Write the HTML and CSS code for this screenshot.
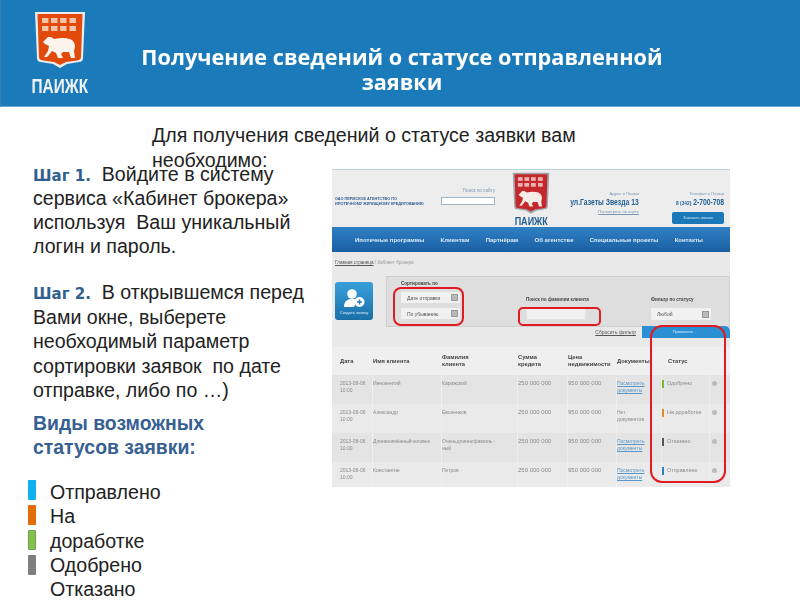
FILE: index.html
```html
<!DOCTYPE html>
<html lang="ru">
<head>
<meta charset="utf-8">
<title>Получение сведений о статусе отправленной заявки</title>
<link rel="stylesheet" href="styles.css">
</head>
<body>
<main class="slide">
  <header class="banner">
    <div class="brand">
      <svg class="shield" viewBox="0 0 52 60" aria-hidden="true">
        <path d="M1 1 L51 1 L49 47 Q49 51 45 51 L33 53 L26 57 L19 53 L7 51 Q3 51 3 47 Z" fill="#e9edf0"/>
        <path d="M3.500 3 L48.500 3 L47 46 Q47 49 43 49.500 L32 51 L26 54 L20 51 L9 49.500 Q5 49 5 46 Z" fill="#e24a0c"/>
        <g fill="#f6c4ab">
          <rect x="8" y="7" width="6.500" height="5"/><rect x="17" y="7" width="6.500" height="5"/><rect x="26" y="7" width="6.500" height="5"/><rect x="35.500" y="7" width="6.500" height="5"/>
          <rect x="8" y="15" width="6.500" height="5"/><rect x="17" y="15" width="6.500" height="5"/><rect x="26" y="15" width="6.500" height="5"/><rect x="35.500" y="15" width="6.500" height="5"/>
        </g>
        <path d="M9 31 L12 28 L14 26 L17 26 L20 28 Q29 26 36 28 Q41 30 41 36 L40 40 L41 47 L37 47 L35 41 L29 41 L27 43 L29 47 L24 47 L22 42 L18 40 L15 44 L13 46 L10 46 L14 40 L15 35 L11 33 Z" fill="#fbf3ec"/>
      </svg>
      <span class="brand-name">ПАИЖК</span>
    </div>
    <h1 class="title">Получение сведений о статусе отправленной заявки</h1>
  </header>

  <p class="intro">Для получения сведений о статусе заявки вам необходимо:</p>

  <section class="steps">
    <p class="step"><b class="step-label">Шаг 1.</b> &nbsp;Войдите в систему сервиса «Кабинет брокера» используя&nbsp; Ваш уникальный логин и пароль.</p>
    <p class="step step-second"><b class="step-label">Шаг 2.</b> &nbsp;В открывшемся перед Вами окне, выберете необходимый параметр сортировки заявок&nbsp; по дате отправке, либо по …)</p>
  </section>

  <section class="kinds">
    <h2 class="kinds-title">Виды возможных статусов заявки:</h2>
    <div class="legend">
      <div class="swatches">
        <i class="swatch swatch-blue"></i>
        <i class="swatch swatch-orange"></i>
        <i class="swatch swatch-green"></i>
        <i class="swatch swatch-gray"></i>
      </div>
      <ul class="legend-list">
        <li>Отправлено</li>
        <li>На доработке</li>
        <li>Одобрено</li>
        <li>Отказано</li>
      </ul>
    </div>
  </section>

  <figure class="shot">
    <div class="site">
      <div class="site-head">
        <div class="org">ОАО ПЕРМСКОЕ АГЕНТСТВО ПО<br>ИПОТЕЧНОМУ ЖИЛИЩНОМУ КРЕДИТОВАНИЮ</div>
        <div class="site-search">
          <span class="site-search-label">Поиск по сайту</span>
          <span class="site-search-box"></span>
        </div>
        <div class="site-logo">
          <svg class="site-shield" viewBox="0 0 52 60" aria-hidden="true">
            <path d="M1 1 L51 1 L49 47 Q49 51 45 51 L33 53 L26 57 L19 53 L7 51 Q3 51 3 47 Z" fill="#9fa7ad"/>
            <path d="M3.500 3 L48.500 3 L47 46 Q47 49 43 49.500 L32 51 L26 54 L20 51 L9 49.500 Q5 49 5 46 Z" fill="#c4282c"/>
            <g fill="#eeb4b4">
              <rect x="8" y="7" width="6.500" height="5"/><rect x="17" y="7" width="6.500" height="5"/><rect x="26" y="7" width="6.500" height="5"/><rect x="35.500" y="7" width="6.500" height="5"/>
              <rect x="8" y="15" width="6.500" height="5"/><rect x="17" y="15" width="6.500" height="5"/><rect x="26" y="15" width="6.500" height="5"/><rect x="35.500" y="15" width="6.500" height="5"/>
            </g>
            <path d="M9 31 L12 28 L14 26 L17 26 L20 28 Q29 26 36 28 Q41 30 41 36 L40 40 L41 47 L37 47 L35 41 L29 41 L27 43 L29 47 L24 47 L22 42 L18 40 L15 44 L13 46 L10 46 L14 40 L15 35 L11 33 Z" fill="#f6ece6"/>
          </svg>
          <span class="site-logo-name">ПАИЖК</span>
        </div>
        <div class="site-address">
          <span class="tiny">Адрес в Перми</span>
          <span class="big">ул.Газеты Звезда 13</span>
          <span class="tiny tiny-link">Посмотреть на карте</span>
        </div>
        <div class="site-phone">
          <span class="tiny">Телефон в Перми</span>
          <span class="big"><small class="big-code">8 (342)</small> 2-700-708</span>
          <span class="call">Заказать звонок</span>
        </div>
      </div>
      <nav class="site-nav">
        <span>Ипотечные программы</span><span>Клиентам</span><span>Партнёрам</span><span>Об агентстве</span><span>Специальные проекты</span><span>Контакты</span>
      </nav>
      <div class="crumbs"><u>Главная страница</u> / Кабинет брокера</div>
      <div class="tools">
        <div class="create">
          <svg class="create-icon" viewBox="0 0 24 20" aria-hidden="true">
            <circle cx="10" cy="6" r="4.800" fill="#fff"/>
            <path d="M2 19 Q2 12 8 11 L12 11 Q15 11 15 13 L12 19 Z" fill="#fff"/>
            <circle cx="17.500" cy="14" r="5" fill="#fff"/>
            <path d="M17.500 11.500 V16.500 M15 14 H20" stroke="#2a7fc0" stroke-width="1.500"/>
          </svg>
          <span>Создать заявку</span>
        </div>
        <div class="filter">
          <div class="filter-col filter-sort">
            <span class="filter-label">Сортировать по</span>
            <span class="select select-sort">Дате отправки<i></i></span>
            <span class="select select-sort">По убыванию<i></i></span>
          </div>
          <div class="filter-col filter-name">
            <span class="filter-label">Поиск по фамилии клиента</span>
            <span class="input"></span>
          </div>
          <div class="filter-col filter-status">
            <span class="filter-label">Фильтр по статусу</span>
            <span class="select select-status">Любой<i></i></span>
          </div>
        </div>
      </div>
      <div class="actions">
        <u>Сбросить фильтр</u>
        <span class="apply">Применить</span>
      </div>
      <div class="table">
        <div class="row row-head">
          <span>Дата</span><span>Имя клиента</span><span>Фамилия<br>клиента</span><span>Сумма<br>кредита</span><span>Цена<br>недвижимости</span><span>Документы</span><span class="head-status">Статус</span><span></span>
        </div>
        <div class="row">
          <span>2013-08-06 10:00</span><span>Иннокентий</span><span>Карижский</span><span class="num">250 000 000</span><span class="num">950 000 000</span><span class="doc">Посмотреть документы</span><span class="status"><i class="bar bar-green"></i>Одобрено</span><span class="arrow"></span>
        </div>
        <div class="row row-odd">
          <span>2013-08-06 10:00</span><span>Александр</span><span>Евсеенков</span><span class="num">250 000 000</span><span class="num">950 000 000</span><span>Нет<br>документов</span><span class="status"><i class="bar bar-orange"></i>На доработке</span><span class="arrow"></span>
        </div>
        <div class="row">
          <span>2013-08-06 10:00</span><span>Длинноимённыйчеловек</span><span>Оченьдлиннофамиль -<br>ный</span><span class="num">250 000 000</span><span class="num">950 000 000</span><span class="doc">Посмотреть документы</span><span class="status"><i class="bar bar-gray"></i>Отказано</span><span class="arrow"></span>
        </div>
        <div class="row row-odd row-last">
          <span>2013-08-06 10:00</span><span>Константин</span><span>Петров</span><span class="num">250 000 000</span><span class="num">950 000 000</span><span class="doc">Посмотреть документы</span><span class="status"><i class="bar bar-blue"></i>Отправлено</span><span class="arrow"></span>
        </div>
      </div>
    </div>
    <span class="mark mark-sort"></span>
    <span class="mark mark-name"></span>
    <span class="mark mark-status"></span>
  </figure>
</main>
</body>
</html>
```
FILE: styles.css
```css
* { box-sizing: border-box; }
html, body { margin: 0; padding: 0; }
body { width: 800px; height: 600px; overflow: hidden; background: #fff; font-family: "Liberation Sans", Arial, sans-serif; color: #1a1a1a; }
.slide { position: relative; width: 800px; height: 600px; overflow: hidden; }

.banner { height: 107px; background: #1b7ab9; border-bottom: 1px solid #6fa8cf; border-left: 1px solid #3f7ea8; display: flex; }
.brand { width: 60px; margin-left: 29px; padding-top: 11px; display: flex; flex-direction: column; align-items: center; }
.shield { width: 52px; height: 60px; display: block; filter: blur(.4px); flex: none; }
.brand-name { margin-top: 5px; color: #eef3f7; font: 700 20px/20px "Liberation Sans", sans-serif; transform: scaleX(.77); filter: blur(.3px); white-space: nowrap; }
.title { margin: 0; position: absolute; left: 128px; top: 44px; width: 548px; color: #fff; font: 700 21.700px/25px "Open Sans", "Liberation Sans", sans-serif; text-align: center; filter: blur(.25px); }

.intro { position: absolute; left: 152px; top: 123px; width: 440px; margin: 0; font-size: 19.600px; line-height: 25px; color: #222; }

.steps { position: absolute; left: 33px; top: 162px; width: 280px; font-size: 19.600px; line-height: 24px; color: #222; }
.step { margin: 0; }
.step-second { margin-top: 22px; line-height: 24.500px; }
.step-label { color: #2f5f8f; font-family: "DejaVu Sans", sans-serif; font-size: 15px; line-height: 1; }

.kinds { position: absolute; left: 33px; top: 411px; width: 210px; }
.kinds-title { margin: 0; width: 190px; color: #376092; font: 700 19.400px/24px "Liberation Sans", sans-serif; }
.legend { display: flex; margin-top: 21px; margin-left: -5px; }
.swatches { display: flex; flex-direction: column; gap: 5px; }
.swatch { display: block; width: 8px; height: 20px; border-radius: 1px; }
.swatch-blue { background: #0fb0ee; }
.swatch-orange { background: #e36c0a; }
.swatch-green { background: #86c24a; border: 1px solid #6f9a4f; }
.swatch-gray { background: #7f7f7f; }
.legend-list { list-style: none; margin: 0 0 0 14px; padding: 0; width: 118px; font-size: 19.600px; line-height: 24.300px; color: #222; }

.shot { position: absolute; left: 332px; top: 169px; width: 398px; height: 318px; margin: 0; background: #e9e9e9; }
.site { width: 398px; height: 318px; overflow: hidden; display: flex; flex-direction: column; filter: blur(.65px); font-size: 5px; color: #666; background: #e9e9e9; }
.site-head { height: 58px; flex: none; padding: 0 0 0 3px; display: flex; border-top: 1px solid #bcd3e6; background: #ededed; }
.org { width: 105px; padding-top: 27px; font: 700 3.800px/5px "Liberation Sans", sans-serif; color: #2d5f93; white-space: nowrap; }
.site-search { width: 55px; padding-top: 18px; display: flex; flex-direction: column; align-items: flex-end; gap: 4px; color: #7d9ab5; font-size: 4.600px; }
.site-search-box { width: 54px; height: 8px; border: 1px solid #9fb4c6; background: #fff; }
.site-logo { width: 44px; margin-left: 14px; display: flex; flex-direction: column; align-items: center; }
.site-shield { width: 38px; height: 44px; display: block; flex: none; margin-top: 2px; }
.site-logo-name { font: 700 11px/11px "Liberation Sans", sans-serif; color: #1f5e94; transform: scaleX(.82); }
.site-address { width: 74px; margin-left: 12px; padding-top: 21px; display: flex; flex-direction: column; align-items: flex-end; gap: 2px; }
.site-phone { width: 85px; padding-top: 21px; display: flex; flex-direction: column; align-items: flex-end; gap: 2px; }
.tiny { color: #7d9ab5; font-size: 4.200px; line-height: 5px; white-space: nowrap; }
.tiny-link { text-decoration: underline; }
.big { color: #1f5e94; font: 700 8.500px/9px "Liberation Sans", sans-serif; white-space: nowrap; transform: scaleX(.8); transform-origin: right center; }
.big-code { font-size: 6px; }
.call { width: 52px; height: 12px; margin-top: 2px; border-radius: 2px; background: #1b78b8; color: #cfe6f5; text-align: center; line-height: 12px; font-size: 4px; }

.site-nav { height: 25px; flex: none; background: linear-gradient(#2f80c4, #1b5fa3); display: flex; align-items: center; padding: 0 27px 0 23px; justify-content: space-between; color: #dcebf7; font-size: 6px; font-weight: 700; }
.crumbs { height: 24px; flex: none; padding: 8px 0 0 3px; color: #999; font-size: 4.600px; }
.crumbs u { color: #555; }

.tools { height: 51px; flex: none; display: flex; padding: 0 0 0 3px; }
.create { width: 38px; height: 38px; margin-top: 6px; border-radius: 3px; background: linear-gradient(#38a0dc, #1b6fa8); color: #d8ecf9; display: flex; flex-direction: column; align-items: center; font-size: 4px; flex: none; white-space: nowrap; }
.create-icon { width: 24px; height: 20px; margin: 6px 0 2px; flex: none; }
.filter { margin-left: 13px; flex: 1; height: 51px; background: #dedede; border: 1px solid #cfcfcf; display: flex; }
.filter-col { display: flex; flex-direction: column; }
.filter-label { font-weight: 700; color: #444; font-size: 4.600px; line-height: 6px; white-space: nowrap; }
.filter-sort { width: 139px; padding: 4px 0 0 14px; gap: 5px; }
.filter-name { width: 125px; padding: 20px 0 0 0; gap: 5px; }
.filter-status { padding: 20px 0 0 0; gap: 5px; }
.select { display: flex; align-items: center; justify-content: space-between; background: #f1f1f1; color: #555; padding: 0 2px 0 6px; height: 11px; font-size: 5px; white-space: nowrap; flex: none; }
.select i { width: 7px; height: 7px; background: #b9b9b9; border: 1px solid #999; flex: none; }
.select-sort { width: 59px; }
.select-status { width: 60px; height: 12px; }
.input { display: block; width: 60px; height: 12px; background: #f1f1f1; border: 1px solid #e2e2e2; }

.actions { height: 12px; flex: none; margin-top: -1px; display: flex; justify-content: flex-end; align-items: center; gap: 6px; font-size: 5px; color: #555; }
.apply { width: 88px; height: 12px; padding-right: 6px; background: #2b8fd3; color: #d5ecfa; text-align: center; line-height: 12px; font-size: 4px; border-radius: 0 5px 0 0; }

.table { margin-top: 9px; display: flex; flex-direction: column; }
.row { height: 29px; flex: none; display: grid; grid-template-columns: 33px 69px 76px 50px 49px 45px 48px 18px; padding-left: 8px; line-height: 7px; font-size: 5px; color: #8a8a8a; background: #e4e4e4; }
.row > span { padding: 5px 3px 0 0; border-right: 1px solid #efefef; }
.row-odd { background: #eaeaea; }
.row-last { border-bottom: 2px solid #a8a8a8; height: 27px; }
.row-head { height: 28px; color: #444; font-weight: 700; font-size: 5.800px; background: #efefef; }
.row-head > span { padding: 0 3px 0 0; display: flex; align-items: center; }
.row-head .head-status { padding-left: 6px; }
.row .num { font-size: 6px; }
.doc { color: #5a97c8; text-decoration: underline; }
.status { display: flex; align-items: flex-start; gap: 3px; white-space: nowrap; font-size: 5.400px; }
.bar { display: block; width: 2px; height: 8px; flex: none; }
.bar-green { background: #7cb236; }
.bar-orange { background: #e08a2a; }
.bar-gray { background: #555; }
.bar-blue { background: #2a80c5; }
.row .arrow { display: block; width: 5px; height: 5px; margin: 6px 0 0 2px; border: 0; padding: 0; border-radius: 50%; background: #bbb; }

.mark { position: absolute; border: 2px solid #e01b22; border-radius: 8px; }
.mark-sort { left: 61px; top: 118px; width: 71px; height: 39px; }
.mark-name { left: 186px; top: 138px; width: 83px; height: 19px; border-radius: 5px; }
.mark-status { left: 318px; top: 156px; width: 76px; height: 158px; border-radius: 12px; }
```
